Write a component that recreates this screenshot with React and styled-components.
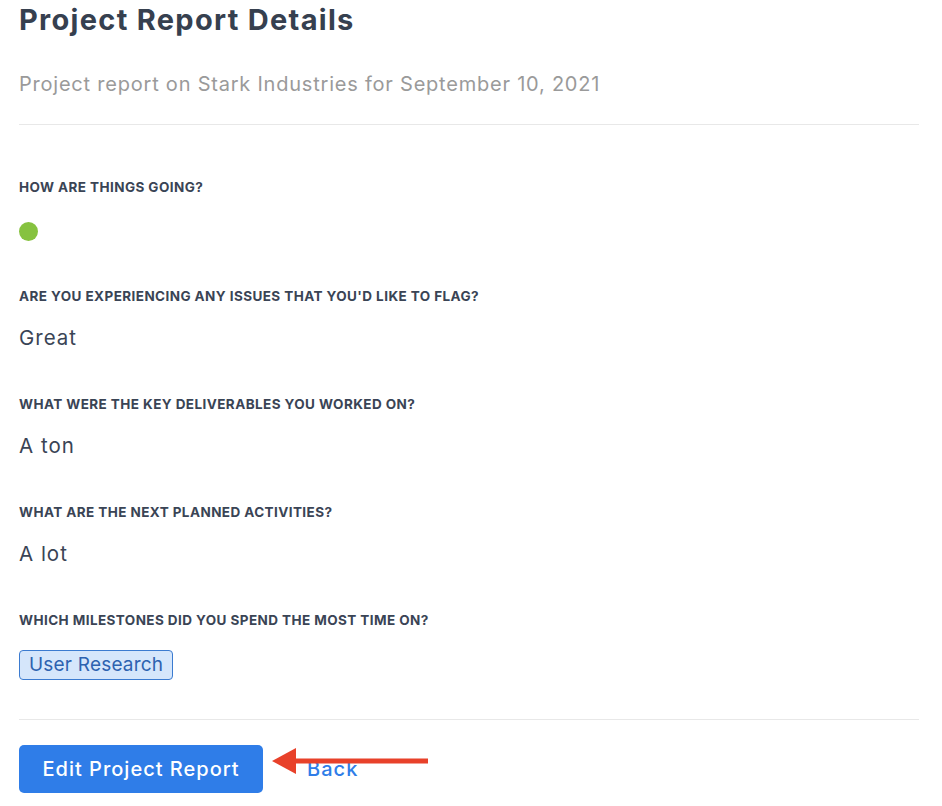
import React from 'react';
import styled, { createGlobalStyle } from 'styled-components';

const GlobalStyle = createGlobalStyle`
  body {
    margin: 0;
    background: #fff;
    font-family: Inter, "Liberation Sans", sans-serif;
  }
`;

const questions = [
  { label: 'How are things going?', status: true },
  { label: "Are you experiencing any issues that you'd like to flag?", value: 'Great' },
  { label: 'What were the key deliverables you worked on?', value: 'A ton' },
  { label: 'What are the next planned activities?', value: 'A lot' },
  { label: 'Which milestones did you spend the most time on?', tags: ['User Research'] },
];

const App = () => {
  return (
    <Page>
      <GlobalStyle />
      <Header>
        <Title>Project Report Details</Title>
        <Subtitle>Project report on Stark Industries for September 10, 2021</Subtitle>
      </Header>
      <Divider />
      <Questions>
        {questions.map((q) => (
          <Question key={q.label}>
            <Label>{q.label}</Label>
            {q.status && <StatusDot />}
            {q.value && <Answer>{q.value}</Answer>}
            {q.tags && (
              <Tags>
                {q.tags.map((t) => (
                  <Tag key={t}>{t}</Tag>
                ))}
              </Tags>
            )}
          </Question>
        ))}
      </Questions>
      <Divider />
      <Actions>
        <PrimaryButton>Edit Project Report</PrimaryButton>
        <LinkButton>Back</LinkButton>
        <Arrow width="156" height="26" viewBox="0 0 156 26">
          <polygon points="0,13 24,0 24,26" fill="#e8412a" />
          <rect x="20" y="10.5" width="136" height="5" fill="#e8412a" />
        </Arrow>
      </Actions>
    </Page>
  );
};

const Page = styled.div`
  width: 900px;
  padding: 0 23px 0 19px;
  color: #3a4455;
`;

const Header = styled.header`
  padding: 2px 0 28px;
`;

const Title = styled.h1`
  margin: 0;
  font-size: 29px;
  line-height: 36px;
  font-weight: 700;
  letter-spacing: 1.3px;
  color: #36404f;
`;

const Subtitle = styled.p`
  margin: 34px 0 0;
  font-size: 20px;
  line-height: 24px;
  letter-spacing: 0.78px;
  color: #9a9a9a;
`;

const Divider = styled.hr`
  margin: 0;
  border: 0;
  border-top: 1px solid #e8e8e8;
`;

const Questions = styled.div`
  display: flex;
  flex-direction: column;
  gap: 46px;
  padding: 54px 0 39px;
`;

const Question = styled.div`
  display: flex;
  flex-direction: column;
  align-items: flex-start;
  gap: 22px;
`;

const Label = styled.div`
  font-size: 13.5px;
  line-height: 16px;
  font-weight: 700;
  letter-spacing: 0.42px;
  text-transform: uppercase;
  color: #3a4455;
`;

const StatusDot = styled.span`
  width: 19px;
  height: 19px;
  margin-top: 5px;
  margin-bottom: 1px;
  border-radius: 50%;
  background: #86c23f;
`;

const Answer = styled.div`
  font-size: 20.5px;
  line-height: 24px;
  letter-spacing: 1px;
  color: #3a4455;
`;

const Tags = styled.div`
  display: flex;
  gap: 8px;
`;

const Tag = styled.span`
  padding: 3px 9px;
  border: 1px solid #3b7bd0;
  border-radius: 4px;
  background: #d5e6fb;
  color: #2d62b0;
  font-size: 19px;
  line-height: 22px;
  letter-spacing: 0.2px;
`;

const Actions = styled.div`
  position: relative;
  display: flex;
  align-items: center;
  gap: 44px;
  padding-top: 25px;
`;

const PrimaryButton = styled.button`
  height: 48px;
  padding: 0 23.5px;
  border: 0;
  border-radius: 5px;
  background: #2f7de8;
  color: #fff;
  font-family: inherit;
  font-size: 20px;
  font-weight: 500;
  letter-spacing: 1px;
`;

const LinkButton = styled.button`
  padding: 0;
  border: 0;
  background: none;
  color: #2f7de8;
  font-family: inherit;
  font-size: 20px;
  font-weight: 500;
  letter-spacing: 1px;
`;

const Arrow = styled.svg`
  position: absolute;
  left: 253px;
  top: 28px;
`;

export default App;
